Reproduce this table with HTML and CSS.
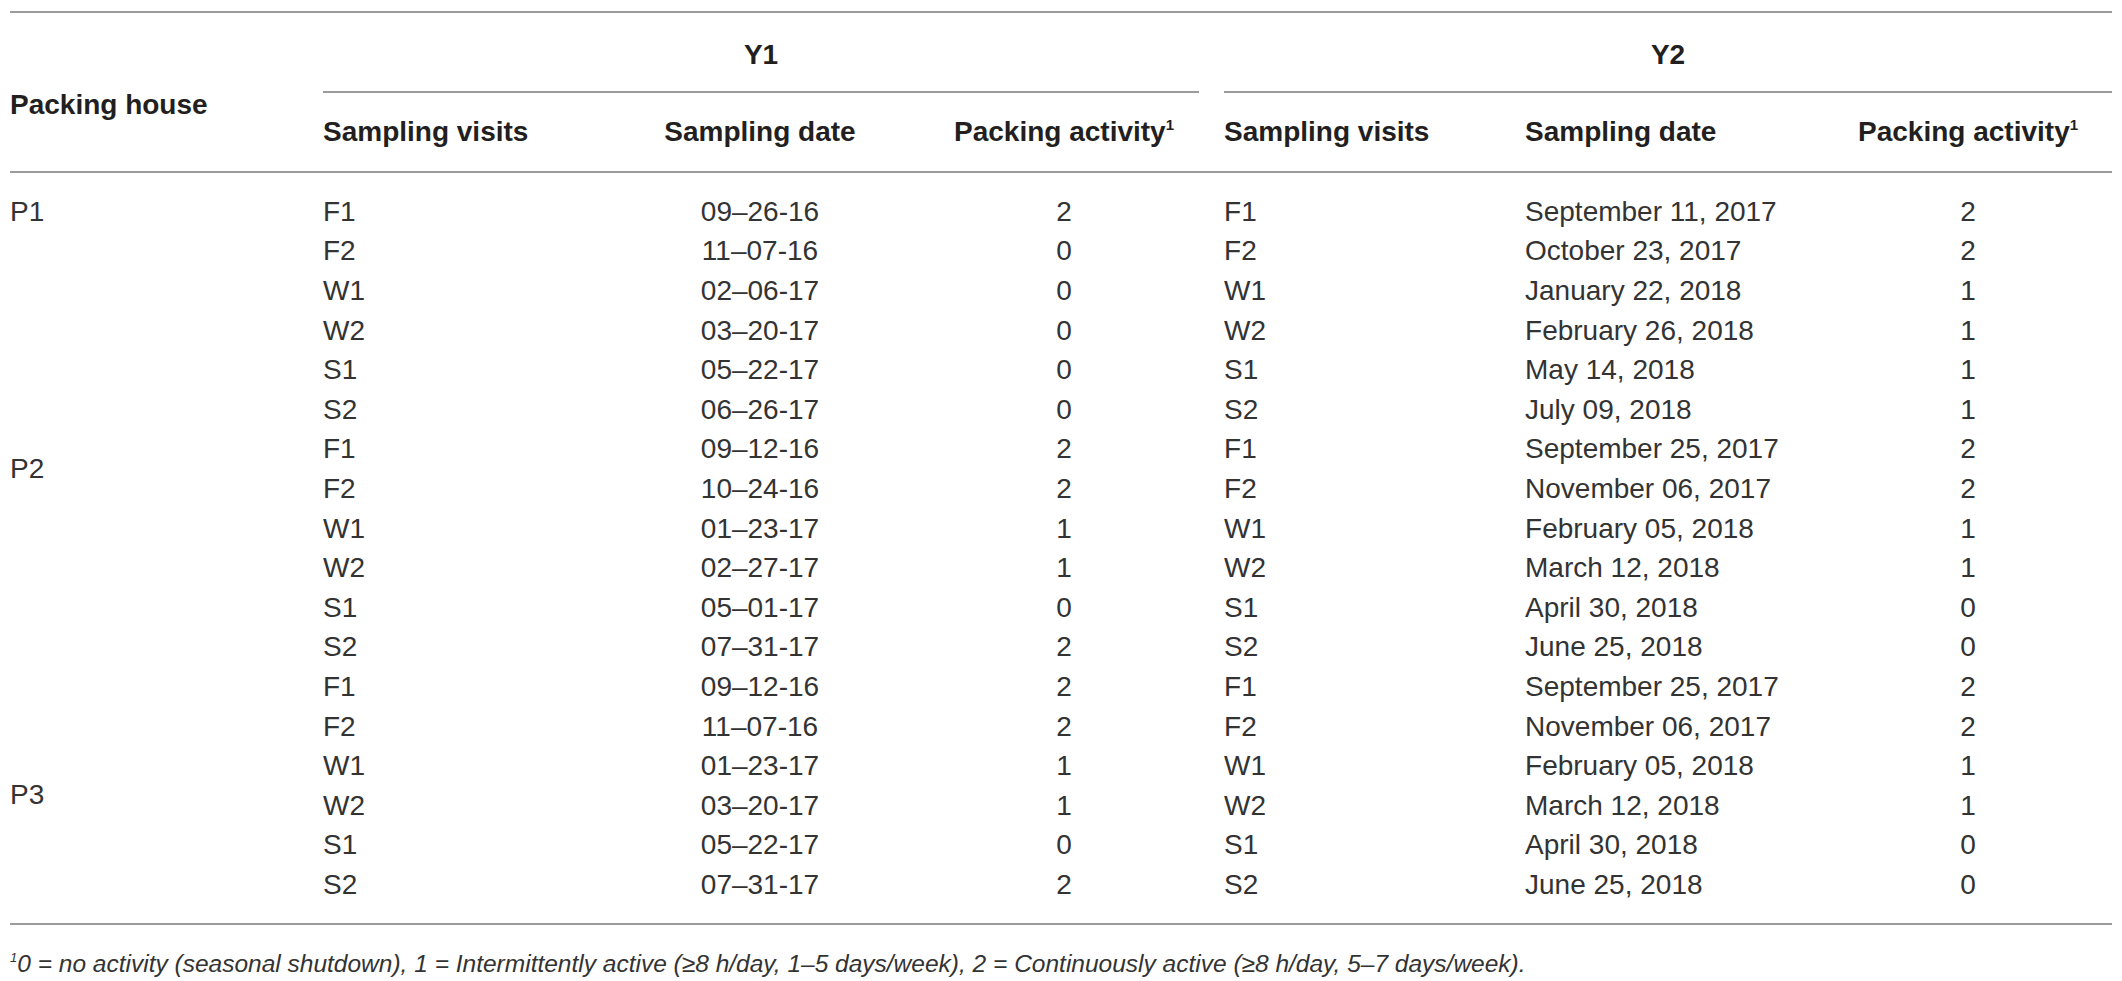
FILE: index.html
```html
<!DOCTYPE html>
<html lang="en">
<head>
<meta charset="UTF-8">
<title>Sampling visits per packing house</title>
<link rel="stylesheet" href="styles.css">
</head>
<body>

<div class="table-wrap">
<table class="visits">
    <colgroup>
        <col class="c-house">
        <col class="c-visit1">
        <col class="c-date1">
        <col class="c-act1">
        <col class="c-gap">
        <col class="c-visit2">
        <col class="c-date2">
        <col class="c-act2">
    </colgroup>
    <thead>
        <tr class="year-row">
            <th rowspan="2" class="house-head">Packing house</th>
            <th colspan="3" class="year">Y1</th>
            <th class="gap"></th>
            <th colspan="3" class="year">Y2</th>
        </tr>
        <tr class="sub-row">
            <th class="left">Sampling visits</th>
            <th>Sampling date</th>
            <th>Packing activity<sup>1</sup></th>
            <th class="gap"></th>
            <th class="left">Sampling visits</th>
            <th class="left">Sampling date</th>
            <th>Packing activity<sup>1</sup></th>
        </tr>
    </thead>
    <tbody>
        <tr class="first">
            <td rowspan="6" class="house">P1</td>
            <td>F1</td><td class="mid">09–26-16</td><td class="mid">2</td><td></td>
            <td>F1</td><td>September 11, 2017</td><td class="mid">2</td>
        </tr>
        <tr>
            <td>F2</td><td class="mid">11–07-16</td><td class="mid">0</td><td></td>
            <td>F2</td><td>October 23, 2017</td><td class="mid">2</td>
        </tr>
        <tr>
            <td>W1</td><td class="mid">02–06-17</td><td class="mid">0</td><td></td>
            <td>W1</td><td>January 22, 2018</td><td class="mid">1</td>
        </tr>
        <tr>
            <td>W2</td><td class="mid">03–20-17</td><td class="mid">0</td><td></td>
            <td>W2</td><td>February 26, 2018</td><td class="mid">1</td>
        </tr>
        <tr>
            <td>S1</td><td class="mid">05–22-17</td><td class="mid">0</td><td></td>
            <td>S1</td><td>May 14, 2018</td><td class="mid">1</td>
        </tr>
        <tr>
            <td>S2</td><td class="mid">06–26-17</td><td class="mid">0</td><td></td>
            <td>S2</td><td>July 09, 2018</td><td class="mid">1</td>
        </tr>
        <tr>
            <td rowspan="6" class="house">P2</td>
            <td>F1</td><td class="mid">09–12-16</td><td class="mid">2</td><td></td>
            <td>F1</td><td>September 25, 2017</td><td class="mid">2</td>
        </tr>
        <tr>
            <td>F2</td><td class="mid">10–24-16</td><td class="mid">2</td><td></td>
            <td>F2</td><td>November 06, 2017</td><td class="mid">2</td>
        </tr>
        <tr>
            <td>W1</td><td class="mid">01–23-17</td><td class="mid">1</td><td></td>
            <td>W1</td><td>February 05, 2018</td><td class="mid">1</td>
        </tr>
        <tr>
            <td>W2</td><td class="mid">02–27-17</td><td class="mid">1</td><td></td>
            <td>W2</td><td>March 12, 2018</td><td class="mid">1</td>
        </tr>
        <tr>
            <td>S1</td><td class="mid">05–01-17</td><td class="mid">0</td><td></td>
            <td>S1</td><td>April 30, 2018</td><td class="mid">0</td>
        </tr>
        <tr>
            <td>S2</td><td class="mid">07–31-17</td><td class="mid">2</td><td></td>
            <td>S2</td><td>June 25, 2018</td><td class="mid">0</td>
        </tr>
        <tr>
            <td rowspan="6" class="house centered">P3</td>
            <td>F1</td><td class="mid">09–12-16</td><td class="mid">2</td><td></td>
            <td>F1</td><td>September 25, 2017</td><td class="mid">2</td>
        </tr>
        <tr>
            <td>F2</td><td class="mid">11–07-16</td><td class="mid">2</td><td></td>
            <td>F2</td><td>November 06, 2017</td><td class="mid">2</td>
        </tr>
        <tr>
            <td>W1</td><td class="mid">01–23-17</td><td class="mid">1</td><td></td>
            <td>W1</td><td>February 05, 2018</td><td class="mid">1</td>
        </tr>
        <tr>
            <td>W2</td><td class="mid">03–20-17</td><td class="mid">1</td><td></td>
            <td>W2</td><td>March 12, 2018</td><td class="mid">1</td>
        </tr>
        <tr>
            <td>S1</td><td class="mid">05–22-17</td><td class="mid">0</td><td></td>
            <td>S1</td><td>April 30, 2018</td><td class="mid">0</td>
        </tr>
        <tr class="last">
            <td>S2</td><td class="mid">07–31-17</td><td class="mid">2</td><td></td>
            <td>S2</td><td>June 25, 2018</td><td class="mid">0</td>
        </tr>
    </tbody>
</table>

<p class="footnote"><sup>1</sup>0 = no activity (seasonal shutdown), 1 = Intermittently active (≥8 h/day, 1–5 days/week), 2 = Continuously active (≥8 h/day, 5–7 days/week).</p>
</div>

</body>
</html>
```

FILE: styles.css
```css
body {
    margin: 0;
    padding: 0;
    background-color: #fff;
    color: #231f20;
    font-family: "Liberation Sans", Arial, sans-serif;
}

.table-wrap {
    padding: 11px 10px 0 10px;
}

.visits {
    width: 2102px;
    table-layout: fixed;
    border-collapse: separate;
    border-spacing: 0;
    font-size: 28px;
}

/* column widths */
.c-house  { width: 313px; }
.c-visit1 { width: 268px; }
.c-date1  { width: 338px; }
.c-act1   { width: 270px; }
.c-gap    { width: 25px; }
.c-visit2 { width: 301px; }
.c-date2  { width: 299px; }
.c-act2   { width: 288px; }

.visits th,
.visits td {
    padding: 0;
    box-sizing: border-box;
}

/* header */
.visits th {
    font-weight: 700;
    text-align: center;
    line-height: 32px;
}

.visits th.left {
    text-align: left;
}

.year-row th {
    height: 82px;
    border-top: 2px solid #9b9b9b;
    padding-top: 6px;
}

.year-row th.year {
    border-bottom: 2px solid #9b9b9b;
}

.house-head {
    text-align: left !important;
    vertical-align: middle;
    padding-top: 26px !important;
    border-bottom: 2px solid #9b9b9b;
}

.sub-row th {
    height: 80px;
    border-bottom: 2px solid #9b9b9b;
}

.visits sup {
    font-size: 15px;
    vertical-align: 11px;
    line-height: 0;
}

/* body */
.visits td {
    height: 39.6px;
    line-height: 32px;
    font-weight: 400;
    color: #333;
    text-align: left;
    vertical-align: middle;
}

.visits td.mid {
    text-align: center;
}

.visits td.house {
    vertical-align: top;
    padding-top: 23px;
}

.visits td.house.centered {
    vertical-align: middle;
    padding-top: 0;
}

.visits tr.first td {
    height: 58.6px;
    padding-top: 19px;
}

.visits tr.first td.house {
    height: auto;
    padding-top: 23px;
}

.visits tr.last td,
.visits td.house.centered {
    border-bottom: 2px solid #9b9b9b;
}

.visits tr.last td {
    height: 59.6px;
    padding-bottom: 18px;
}

.footnote {
    margin: 25px 0 0 0;
    font-size: 24.5px;
    font-style: italic;
    color: #333;
}

.footnote sup {
    font-size: 13px;
    vertical-align: 10px;
    line-height: 0;
}
```
